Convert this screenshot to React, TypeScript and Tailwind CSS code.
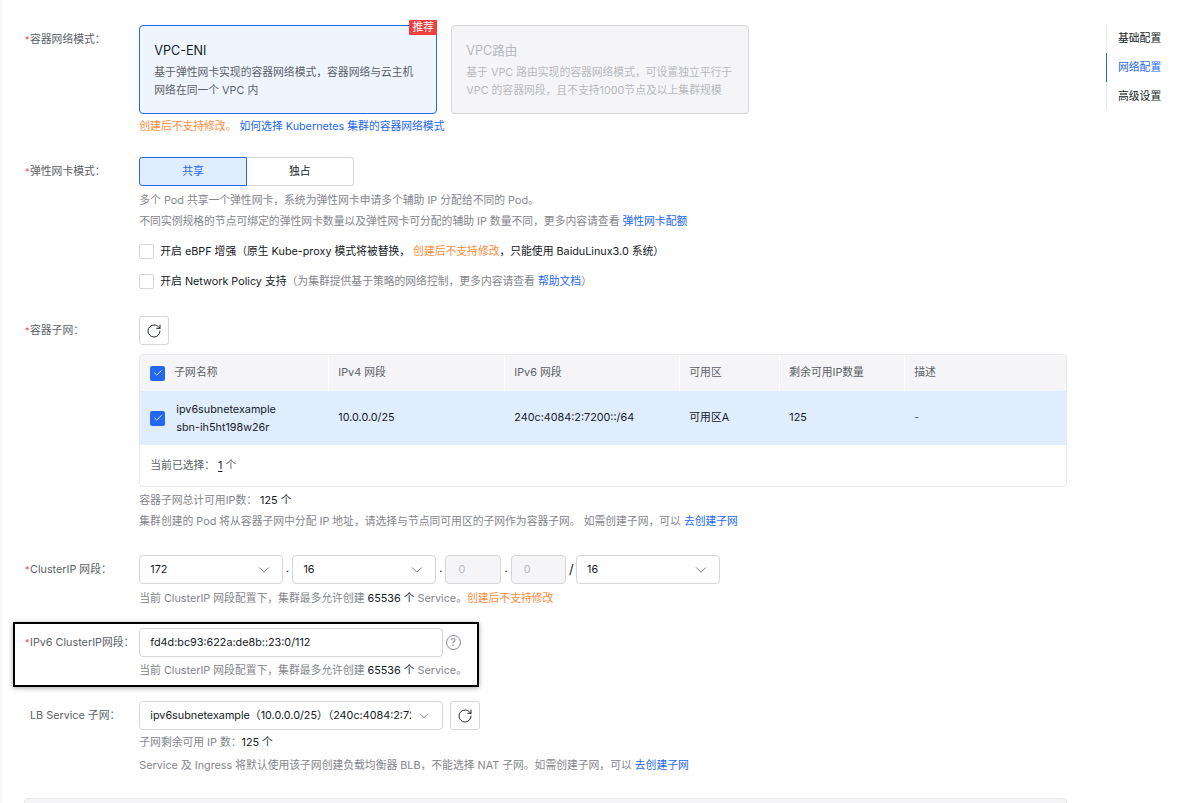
import { RotateCw, ChevronDown, Check } from "lucide-react";
import type { ReactNode } from "react";

const Label = ({ children }: { children: ReactNode }) => (
  <div className="w-[115.3px] shrink-0 h-[29px] pt-[2px] flex items-center text-[#5c5f66] whitespace-nowrap">
    <span className="w-[6px] pl-[1px] text-[#f33e3e] text-[9px] leading-none -translate-y-[1px]">*</span>
    {children}：
  </div>
);

const Hint = ({ children, className = "" }: { children: ReactNode; className?: string }) => (
  <div className={`text-[#84868c] h-[21px] leading-[21px] whitespace-nowrap ${className}`}>{children}</div>
);

const Box = ({ checked = false }: { checked?: boolean }) =>
  checked ? (
    <span className="w-[15px] h-[15px] rounded-[2px] bg-[#2468f2] flex items-center justify-center shrink-0">
      <Check size={10} strokeWidth={2} className="text-white" />
    </span>
  ) : (
    <span className="w-[15px] h-[15px] rounded-[2px] border border-[#d4d6d9] bg-white shrink-0"></span>
  );

const Select = ({ value }: { value: string }) => (
  <div className="w-[143.5px] h-[29px] border border-[#d4d6d9] rounded-[4px] bg-white flex items-center justify-between pl-[10px] pr-[9px] text-[#151b26] shrink-0">
    <span className="pt-[1px]">{value}</span>
    <ChevronDown size={18} strokeWidth={1.1} className="text-[#5c5f66]" />
  </div>
);

const Disabled = () => (
  <div className="w-[55.7px] h-[29px] border border-[#d4d6d9] rounded-[4px] bg-[#f5f5f7] flex items-center pl-[12px] pt-[1px] text-[#b8babf] shrink-0">0</div>
);

const Dot = () => <span className="w-[9.6px] text-center text-[#151b26] shrink-0">.</span>;

const Refresh = () => (
  <div className="w-[30px] h-[29px] border border-[#d4d6d9] rounded-[3px] bg-white flex items-center justify-center shrink-0">
    <RotateCw size={16} strokeWidth={1.4} className="text-[#151b26]" />
  </div>
);

const Orange = ({ children }: { children: ReactNode }) => <span className="text-[#ff8c3a]">{children}</span>;
const Blue = ({ children }: { children: ReactNode }) => <span className="text-[#2468f2]">{children}</span>;
const Dark = ({ children }: { children: ReactNode }) => <span className="text-[#151b26]">{children}</span>;

const cols = [
  { w: "w-[188px]", head: "子网名称" },
  { w: "w-[176px]", head: "IPv4 网段" },
  { w: "w-[175px]", head: "IPv6 网段" },
  { w: "w-[100px]", head: "可用区" },
  { w: "w-[125px]", head: "剩余可用IP数量" },
];

export default function App() {
  return (
    <div className="relative w-[1195px] h-[803px] overflow-hidden bg-white text-[10.8px] font-['Inter','Noto_Sans_CJK_SC',sans-serif]">
      <div className="flex h-full">
        <div className="w-[2px] bg-[#f7f7f9] shrink-0"></div>

        <main className="w-[1065px] shrink-0 pl-[22px] pt-[25px]">
          {/* 容器网络模式 */}
          <section className="flex">
            <Label>容器网络模式</Label>
            <div>
              <div className="flex gap-[14px]">
                <div className="relative w-[298px] h-[89px] border border-[#2468f2] rounded-[4px] bg-[#eef5ff] pl-[14px] pt-[15px]">
                  <span className="absolute -top-[6px] -right-px h-[15px] w-[28px] bg-[#f33e3e] rounded-[1px] text-white text-[10.8px] leading-[15px] text-center">推荐</span>
                  <div className="text-[12.6px] leading-[19px] text-[#151b26]">VPC-ENI</div>
                  <div className="mt-[4px] text-[#5c5f66] leading-[18px] whitespace-nowrap">基于弹性网卡实现的容器网络模式，容器网络与云主机</div>
                  <div className="text-[#5c5f66] leading-[18px] whitespace-nowrap">网络在同一个 VPC 内</div>
                </div>
                <div className="w-[298px] h-[89px] border border-[#d4d6d9] rounded-[4px] bg-[#f5f5f7] pl-[14px] pt-[15px]">
                  <div className="text-[12.6px] leading-[19px] text-[#b8babf]">VPC路由</div>
                  <div className="mt-[4px] text-[#b8babf] leading-[18px] whitespace-nowrap">基于 VPC 路由实现的容器网络模式，可设置独立平行于</div>
                  <div className="text-[#b8babf] leading-[18px] whitespace-nowrap">VPC 的容器网段，且不支持1000节点及以上集群规模</div>
                </div>
              </div>
              <Hint className="mt-[2px]"><Orange>创建后不支持修改。</Orange> <Blue>如何选择 Kubernetes 集群的容器网络模式</Blue></Hint>
            </div>
          </section>

          {/* 弹性网卡模式 */}
          <section className="flex mt-[20px]">
            <Label>弹性网卡模式</Label>
            <div>
              <div className="flex h-[29px] w-[214.5px]">
                <div className="w-[107.5px] pt-[1px] border border-[#2468f2] rounded-l-[3px] bg-[#e0edfe] text-[#2468f2] flex items-center justify-center">共享</div>
                <div className="w-[107px] pt-[1px] border border-l-0 border-[#d4d6d9] rounded-r-[3px] text-[#151b26] flex items-center justify-center">独占</div>
              </div>
              <Hint className="mt-[4px]">多个 Pod 共享一个弹性网卡，系统为弹性网卡申请多个辅助 IP 分配给不同的 Pod。</Hint>
              <Hint>不同实例规格的节点可绑定的弹性网卡数量以及弹性网卡可分配的辅助 IP 数量不同，更多内容请查看 <Blue>弹性网卡配额</Blue></Hint>
              <div className="flex items-center gap-[6px] mt-[12px] h-[15px] text-[#151b26] whitespace-nowrap">
                <Box />
                <span className="pt-[2px]">开启 eBPF 增强（原生 Kube-proxy 模式将被替换， <Orange>创建后不支持修改</Orange>，只能使用 BaiduLinux3.0 系统）</span>
              </div>
              <div className="flex items-center gap-[6px] mt-[15px] h-[15px] text-[#151b26] whitespace-nowrap">
                <Box />
                <span className="pt-[2px]">开启 Network Policy 支持<span className="text-[#84868c]">（为集群提供基于策略的网络控制，更多内容请查看 <Blue>帮助文档</Blue>）</span></span>
              </div>
            </div>
          </section>

          {/* 容器子网 */}
          <section className="flex mt-[27px]">
            <Label>容器子网</Label>
            <div>
              <Refresh />
              <div className="mt-[9px] w-[928px] border border-[#e8e9eb] rounded-[4px] overflow-hidden">
                <div className="flex h-[36px] bg-[#f5f5f7] text-[#5c5f66]">
                  {cols.map((c, i) => (
                    <div key={c.head} className={`${c.w} shrink-0 flex items-center ${i === 0 ? "pl-[10px]" : "pl-[9px] border-l border-white"}`}>
                      {i === 0 && <span className="mr-[9px]"><Box checked /></span>}
                      <span className="pt-[1px]">{c.head}</span>
                    </div>
                  ))}
                  <div className="flex-1 pl-[9px] pt-[1px] flex items-center border-l border-white">描述</div>
                </div>
                <div className="flex h-[54px] bg-[#e0edfe] text-[#151b26]">
                  <div className={`${cols[0].w} pl-[10px] shrink-0 flex items-center`}>
                    <span className="mr-[11px]"><Box checked /></span>
                    <div className="pt-[1px] leading-[18px] whitespace-nowrap">
                      <div>ipv6subnetexample</div>
                      <div>sbn-ih5ht198w26r</div>
                    </div>
                  </div>
                  <div className={`${cols[1].w} pl-[10px] pt-[1px] shrink-0 flex items-center`}>10.0.0.0/25</div>
                  <div className={`${cols[2].w} pl-[10px] pt-[1px] shrink-0 flex items-center`}>240c:4084:2:7200::/64</div>
                  <div className={`${cols[3].w} pl-[10px] pt-[1px] shrink-0 flex items-center`}>可用区A</div>
                  <div className={`${cols[4].w} pl-[10px] pt-[1px] shrink-0 flex items-center`}>125</div>
                  <div className="flex-1 pl-[10px] pt-[1px] flex items-center text-[#5c5f66]">-</div>
                </div>
                <div className="h-[41px] pl-[10px] pt-[2px] flex items-center text-[#5c5f66]">
                  当前已选择： <span className="underline underline-offset-2 text-[#151b26] mx-[3px]">1</span> 个
                </div>
              </div>
              <Hint className="mt-[3px]">容器子网总计可用IP数： <Dark>125 个</Dark></Hint>
              <Hint>集群创建的 Pod 将从容器子网中分配 IP 地址，请选择与节点同可用区的子网作为容器子网。 如需创建子网，可以 <Blue>去创建子网</Blue></Hint>
            </div>
          </section>

          {/* ClusterIP */}
          <section className="flex mt-[23px]">
            <Label>ClusterIP 网段</Label>
            <div>
              <div className="flex items-center">
                <Select value="172" />
                <Dot />
                <Select value="16" />
                <Dot />
                <Disabled />
                <Dot />
                <Disabled />
                <span className="w-[9.6px] text-center text-[#151b26] text-[13px] shrink-0">/</span>
                <Select value="16" />
              </div>
              <Hint className="mt-[4px]">当前 ClusterIP 网段配置下，集群最多允许创建 <Dark>65536 个</Dark> Service。<Orange>创建后不支持修改</Orange></Hint>
            </div>
          </section>

          {/* IPv6 ClusterIP */}
          <section className="relative flex mt-[19px]">
            <div className="absolute -left-[11px] -top-[6px] w-[466px] h-[65px] border-2 border-black shadow-[0_1px_5px_rgba(0,0,0,0.35)] pointer-events-none"></div>
            <Label>IPv6 ClusterIP网段</Label>
            <div>
              <div className="flex items-center">
                <div className="w-[303.5px] h-[29px] border border-[#d4d6d9] rounded-[4px] flex items-center pl-[10px] pt-[1px] text-[#151b26]">fd4d:bc93:622a:de8b::23:0/112</div>
                <span className="ml-[3px] w-[15px] h-[15px] rounded-full border border-[#84868c] text-[#84868c] text-[10px] flex items-center justify-center">?</span>
              </div>
              <Hint className="mt-[3px]">当前 ClusterIP 网段配置下，集群最多允许创建 <Dark>65536 个</Dark> Service。</Hint>
            </div>
          </section>

          {/* LB Service */}
          <section className="flex mt-[20px]">
            <div className="w-[115.3px] shrink-0 h-[29px] pt-[2px] flex items-center pl-[6px] text-[#5c5f66] whitespace-nowrap">LB Service 子网：</div>
            <div>
              <div className="flex items-center gap-[7px]">
                <div className="w-[303.5px] h-[29px] border border-[#d4d6d9] rounded-[4px] flex items-center pl-[10px] pr-[11px] text-[#151b26]">
                  <span className="flex-1 min-w-0 pt-[1px] overflow-hidden whitespace-nowrap">ipv6subnetexample（10.0.0.0/25）（240c:4084:2:7200::/64）</span>
                  <ChevronDown size={14} strokeWidth={1.2} className="ml-[6px] text-[#5c5f66] shrink-0" />
                </div>
                <Refresh />
              </div>
              <Hint className="mt-[2px]">子网剩余可用 IP 数：<Dark>125 个</Dark></Hint>
              <Hint className="mt-[2px]">Service 及 Ingress 将默认使用该子网创建负载均衡器 BLB，不能选择 NAT 子网。如需创建子网，可以 <Blue>去创建子网</Blue></Hint>
            </div>
          </section>

          <div className="mt-[22px] h-[60px] w-[1043px] border border-[#e8e9eb] rounded-[4px] bg-[#f5f5f7]"></div>
        </main>

        {/* 右侧导航 */}
        <nav className="ml-[39px] mt-[24px] w-[80px] h-[86px] border-l border-[#e8e9eb] text-[#151b26] self-start">
          <div className="h-[29px] pl-[11px] pt-[2px] flex items-center">基础配置</div>
          <div className="h-[29px] pl-[11px] pt-[2px] flex items-center text-[#2468f2] border-l border-[#2468f2] -ml-px">网络配置</div>
          <div className="h-[28px] pl-[11px] pt-[2px] flex items-center">高级设置</div>
        </nav>
      </div>
    </div>
  );
}
